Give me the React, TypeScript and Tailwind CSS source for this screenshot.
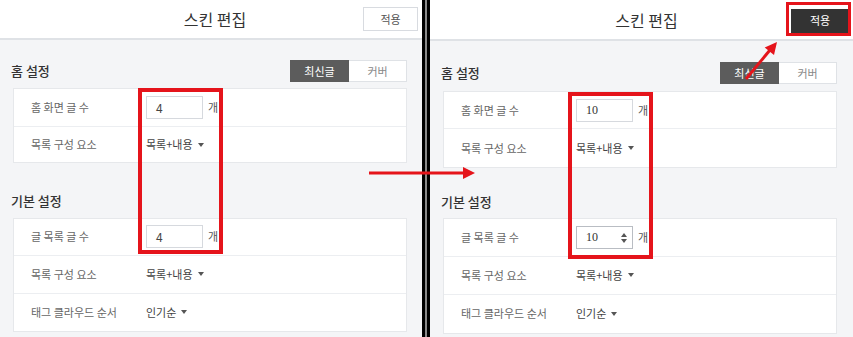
import React from "react";

const KR = { fontFamily: '"Noto Sans CJK KR", "Noto Sans", sans-serif' };

function Caret() {
  return (
    <svg width="6" height="4" viewBox="0 0 6 4" className="ml-[5px]">
      <polygon points="0,0 6,0 3,4" fill="#555" />
    </svg>
  );
}

function Row({ label, children, h }: { label: string; children: React.ReactNode; h: string }) {
  return (
    <div className={`flex items-center border-b border-[#eceef1] last:border-b-0 ${h}`}>
      <div className="w-[132px] pl-[17px] text-[11px] text-[#666]">{label}</div>
      <div className="flex items-center text-[11px] text-[#444]">{children}</div>
    </div>
  );
}

function NumInput({ value, serif, spinner }: { value: string; serif?: boolean; spinner?: boolean }) {
  return (
    <div className="flex items-center">
      <div
        className={`relative flex h-[23px] w-[57px] items-center border bg-white pl-[9px] text-[12px] ${spinner ? "border-[#b9bdc3]" : "border-[#d6d9de]"}`}
        style={serif ? { fontFamily: '"Liberation Serif", serif', color: "#333" } : { color: "#444" }}
      >
        {value}
        {spinner && (
          <svg width="6" height="10" viewBox="0 0 6 10" className="absolute right-[5px] top-[6px]">
            <polygon points="0,4 6,4 3,0" fill="#555" />
            <polygon points="0,6 6,6 3,10" fill="#555" />
          </svg>
        )}
      </div>
      <span className="ml-[5px] text-[11px] text-[#555]">개</span>
    </div>
  );
}

function Panel({ after }: { after?: boolean }) {
  return (
    <div className={`flex h-full flex-col bg-[#f4f5f7] ${after ? "w-[423px]" : "w-[422px]"}`}>
      <div
        className={`grid grid-cols-[1fr_auto_1fr] items-center border-b-2 border-[#dfe2e6] bg-white ${after ? "h-[41px]" : "h-[40px]"}`}
      >
        <div />
        <div className={`text-[16px] text-[#333] ${after ? "pl-[10px]" : "pl-[8px]"}`}>스킨 편집</div>
        <div className="flex justify-end">
          {after ? (
            <div className="mr-[4px] mt-[2px] flex h-[24px] w-[58px] items-center justify-center bg-[#333] text-[11px] text-white">
              적용
            </div>
          ) : (
            <div className="mr-[4px] flex h-[24px] w-[55px] items-center justify-center border border-[#d8dbe0] bg-white text-[11px] text-[#555]">
              적용
            </div>
          )}
        </div>
      </div>

      <div className={`flex flex-col ${after ? "pl-[13px] pr-[16px]" : "pl-[13px] pr-[15px]"}`}>
        <div className={`flex items-center justify-between ${after ? "mt-[21px] h-[22px]" : "mt-[20px] h-[22px]"}`}>
          <div className="-ml-[2px] text-[13px] font-medium text-[#333]">홈 설정</div>
          <div className="flex h-full">
            <div className="flex w-[59px] items-center justify-center bg-[#5c5c5c] text-[11px] text-white">최신글</div>
            <div className="flex w-[58px] items-center justify-center border border-l-0 border-[#dfe2e6] bg-white text-[11px] text-[#888]">
              커버
            </div>
          </div>
        </div>

        <div className={`border border-[#e6e8eb] bg-white ${after ? "mt-[7px]" : "mt-[6px]"}`}>
          <Row label="홈 화면 글 수" h={after ? "h-[37px]" : "h-[38px]"}>
            <NumInput value={after ? "10" : "4"} serif={after} />
          </Row>
          <Row label="목록 구성 요소" h={after ? "h-[38px]" : "h-[35px]"}>
            목록+내용
            <Caret />
          </Row>
        </div>

        <div className={`-ml-[2px] text-[13px] font-medium text-[#333] ${after ? "mt-[24px]" : "mt-[28px]"}`}>기본 설정</div>

        <div className={`border border-[#e6e8eb] bg-white ${after ? "mt-[6px]" : "mt-[7px]"}`}>
          <Row label="글 목록 글 수" h={after ? "h-[38px]" : "h-[37px]"}>
            <NumInput value={after ? "10" : "4"} serif={after} spinner={after} />
          </Row>
          <Row label="목록 구성 요소" h="h-[38px]">
            목록+내용
            <Caret />
          </Row>
          <Row label="태그 클라우드 순서" h={after ? "h-[38px]" : "h-[37px]"}>
            인기순
            <Caret />
          </Row>
        </div>
      </div>
    </div>
  );
}

export default function App() {
  return (
    <div className="relative h-[337px] w-[853px] overflow-hidden bg-white" style={KR}>
      <div className="flex h-full">
        <Panel />
        <div className="flex h-full w-[8px]">
          <div className="w-[3px] bg-black" />
          <div className="w-[2px] bg-[#8a8a8a]" />
          <div className="w-[3px] bg-black" />
        </div>
        <Panel after />
      </div>

      <div className="absolute left-[138px] top-[88px] h-[166px] w-[85px] border-4 border-[#e5141b]" />
      <div className="absolute left-[568px] top-[92px] h-[167px] w-[85px] border-4 border-[#e5141b]" />
      <div className="absolute left-[786px] top-[2px] h-[34px] w-[65px] border-[3px] border-[#e5141b]" />

      <svg className="pointer-events-none absolute left-0 top-0" width="853" height="337">
        <line x1="369" y1="173" x2="465" y2="173" stroke="#e5141b" strokeWidth="3" />
        <polygon points="475,173 463,167 463,179" fill="#e5141b" />
        <line x1="746" y1="79" x2="770" y2="50" stroke="#e5141b" strokeWidth="3" />
        <polygon points="777,42 774,55 764.7,47.4" fill="#e5141b" />
      </svg>
    </div>
  );
}
